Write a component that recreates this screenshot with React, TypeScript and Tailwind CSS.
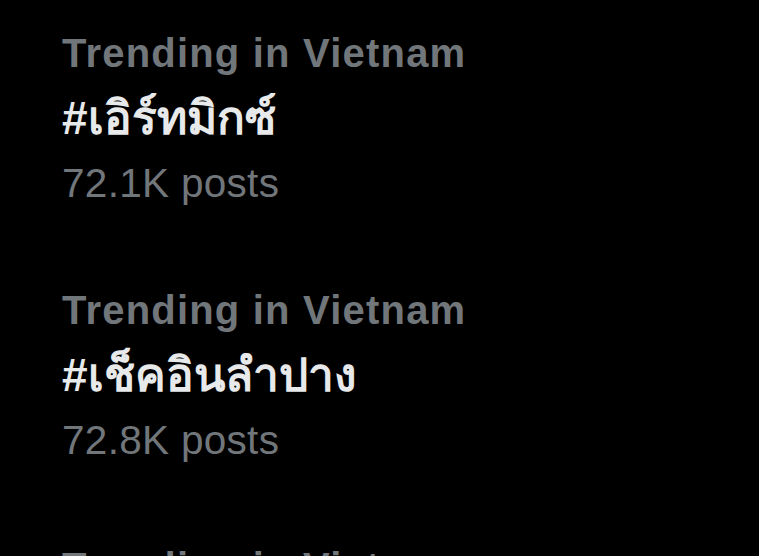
const trends = [
  { place: 'Trending in Vietnam', tag: '#เอิร์ทมิกซ์', posts: '72.1K posts' },
  { place: 'Trending in Vietnam', tag: '#เช็คอินลำปาง', posts: '72.8K posts' },
  { place: 'Trending in Vietnam', tag: '#ไบร์ทวิน', posts: '64.3K posts' },
];

const TrendRow = ({ place, tag, posts }: { place: string; tag: string; posts: string }) => (
  <div className="flex flex-col pl-[62px] pb-[62px]">
    <span className="text-[40px] leading-[65px] font-bold tracking-[1.2px] text-[#71767b]">{place}</span>
    <span className="text-[46px] leading-[65px] font-bold text-[#e7e9ea]">{tag}</span>
    <span className="text-[40.5px] leading-[65px] tracking-[0.3px] text-[#71767b]">{posts}</span>
  </div>
);

export default function App() {
  return (
    <div
      className="w-[759px] h-[556px] overflow-hidden bg-black pt-[21px]"
      style={{ fontFamily: '"Liberation Sans", "Noto Sans", "DejaVu Sans", sans-serif' }}
    >
      {trends.map((t, i) => (
        <TrendRow key={i} {...t} />
      ))}
    </div>
  );
}
